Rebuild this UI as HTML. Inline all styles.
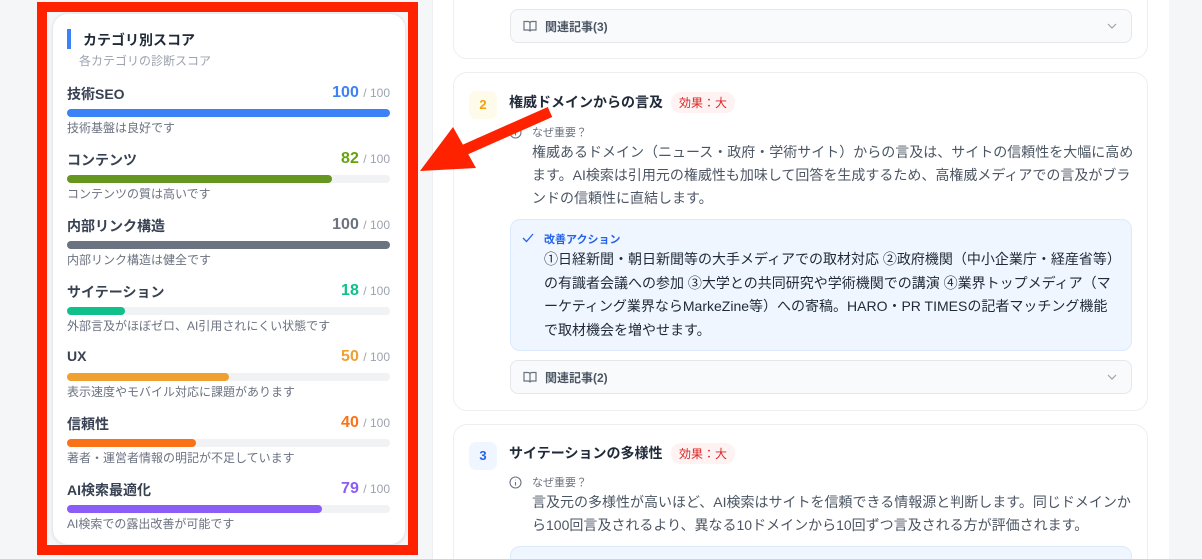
<!DOCTYPE html>
<html style="width:1202px;height:559px;overflow:hidden"><head><meta charset="utf-8"><style>
*{margin:0;padding:0;box-sizing:border-box}
body{width:1202px;height:559px;overflow:hidden;background:#f5f6f8;font-family:"Liberation Sans","Noto Sans CJK JP",sans-serif;position:relative;color:#1f2937}
.a{position:absolute;white-space:nowrap}
.frame{left:37px;top:2px;width:381px;height:553px;border:10px solid #ff2200}
.card{left:52px;top:13px;width:354px;height:532px;background:#fff;border-radius:16px;border:1px solid #e8eaee;box-shadow:0 1px 3px rgba(0,0,0,.08)}
.nm{font-size:14px;font-weight:bold;color:#374151}
.sc{font-size:16px;font-weight:bold;text-align:right}
.sc span{font-size:12px;font-weight:normal;color:#9ca3af}
.bar{left:67px;width:323px;height:8px;border-radius:4px;background:#f1f2f4}
.bar i{display:block;height:8px;border-radius:4px}
.ds{font-size:12px;color:#6b7280}
.panel{left:432px;top:-10px;width:737px;height:569px;background:#fff;border-left:1px solid #eceef1}
.ic{background:#fff;border:1px solid #eceef1;border-radius:14px;left:453px;width:695px}
.rel{left:510px;width:622px;height:34px;background:#f9fafb;border:1px solid #e5e7eb;border-radius:8px;font-size:12px;font-weight:bold;color:#4b5563}
.num{left:469px;width:28px;height:28px;border-radius:7px;font-size:13px;font-weight:bold;text-align:center;line-height:28px}
.h{font-size:14px;font-weight:bold;color:#1f2937}
.bd{font-size:12px;color:#dc2626;background:#fef2f2;border-radius:10px;padding:2px 8px}
.why{font-size:11px;color:#6b7280}
.tx{font-size:14px;color:#4b5563;line-height:23px;white-space:nowrap}
.act{left:510px;width:622px;background:#eff6ff;border:1px solid #dbeafe;border-radius:10px}
</style></head><body>
<div class="a panel"></div>
<div class="a ic" style="top:-20px;height:79px"></div>
<div class="a rel" style="top:9px"><svg class="a" style="left:12px;top:9px" width="14" height="14" viewBox="0 0 14 14" fill="none" stroke="#6b7280" stroke-width="1.2"><path d="M1 2.5h4q2 0 2 2v8q0-1.5-2-1.5H1z M13 2.5H9q-2 0-2 2v8q0-1.5 2-1.5h4z"/></svg><span class="a" style="left:34px;top:8px">関連記事(3)</span><svg class="a" style="right:14px;top:13px" width="10" height="6" viewBox="0 0 10 6" fill="none" stroke="#9ca3af" stroke-width="1.2"><path d="M1 1l4 4 4-4"/></svg></div>
<div class="a ic" style="top:72px;height:339px"></div>
<div class="a num" style="top:91px;background:#fffbeb;color:#f59e0b">2</div>
<div class="a h" style="left:509px;top:92px">権威ドメインからの言及</div>
<div class="a bd" style="left:671px;top:92px">効果：大</div>
<svg class="a" style="left:509px;top:126px" width="13" height="13" viewBox="0 0 13 13" fill="none" stroke="#6b7280" stroke-width="1.1"><circle cx="6.5" cy="6.5" r="5.5"/><path d="M6.5 6v3.5M6.5 3.8v.4"/></svg>
<div class="a why" style="left:532px;top:124px">なぜ重要？</div>
<div class="a tx" style="left:532px;top:141px">権威あるドメイン（ニュース・政府・学術サイト）からの言及は、サイトの信頼性を大幅に高め<br>ます。AI検索は引用元の権威性も加味して回答を生成するため、高権威メディアでの言及がブラ<br>ンドの信頼性に直結します。</div>
<div class="a act" style="top:219px;height:132px"></div>
<svg class="a" style="left:522px;top:233px" width="12" height="10" viewBox="0 0 12 10" fill="none" stroke="#2563eb" stroke-width="1.3"><path d="M1 5l3.5 3.5L11 1"/></svg>
<div class="a" style="left:544px;top:231px;font-size:11px;color:#2563eb;font-weight:bold">改善アクション</div>
<div class="a tx" style="left:544px;top:248px;color:#1f2937;line-height:23.5px">①日経新聞・朝日新聞等の大手メディアでの取材対応 ②政府機関（中小企業庁・経産省等）<br>の有識者会議への参加 ③大学との共同研究や学術機関での講演 ④業界トップメディア（マ<br>ーケティング業界ならMarkeZine等）への寄稿。HARO・PR TIMESの記者マッチング機能<br>で取材機会を増やせます。</div>
<div class="a rel" style="top:360px"><svg class="a" style="left:12px;top:9px" width="14" height="14" viewBox="0 0 14 14" fill="none" stroke="#6b7280" stroke-width="1.2"><path d="M1 2.5h4q2 0 2 2v8q0-1.5-2-1.5H1z M13 2.5H9q-2 0-2 2v8q0-1.5 2-1.5h4z"/></svg><span class="a" style="left:34px;top:8px">関連記事(2)</span><svg class="a" style="right:14px;top:13px" width="10" height="6" viewBox="0 0 10 6" fill="none" stroke="#9ca3af" stroke-width="1.2"><path d="M1 1l4 4 4-4"/></svg></div>
<div class="a ic" style="top:424px;height:150px"></div>
<div class="a num" style="top:442px;background:#eff6ff;color:#2563eb">3</div>
<div class="a h" style="left:509px;top:443px">サイテーションの多様性</div>
<div class="a bd" style="left:671px;top:443px">効果：大</div>
<svg class="a" style="left:509px;top:476px" width="13" height="13" viewBox="0 0 13 13" fill="none" stroke="#6b7280" stroke-width="1.1"><circle cx="6.5" cy="6.5" r="5.5"/><path d="M6.5 6v3.5M6.5 3.8v.4"/></svg>
<div class="a why" style="left:532px;top:474px">なぜ重要？</div>
<div class="a tx" style="left:532px;top:491px">言及元の多様性が高いほど、AI検索はサイトを信頼できる情報源と判断します。同じドメインか<br>ら100回言及されるより、異なる10ドメインから10回ずつ言及される方が評価されます。</div>
<div class="a act" style="top:546px;height:20px"></div>

<div class="a frame"></div>
<div class="a card"></div>
<div class="a" style="left:67px;top:29px;width:4px;height:20px;background:#3b82f6"></div>
<div class="a" style="left:83px;top:30px;font-size:14px;font-weight:bold;color:#1f2937">カテゴリ別スコア</div>
<div class="a" style="left:79px;top:52px;font-size:12px;color:#9ca3af">各カテゴリの診断スコア</div>

<div class="a nm" style="left:67px;top:84px">技術SEO</div><div class="a sc" style="right:812px;top:84px;color:#3b82f6">100 <span>/ 100</span></div>
<div class="a bar" style="top:109px"><i style="width:100%;background:#3b82f6"></i></div><div class="a ds" style="left:67px;top:119px">技術基盤は良好です</div>

<div class="a nm" style="left:67px;top:150px">コンテンツ</div><div class="a sc" style="right:812px;top:150px;color:#65a30d">82 <span>/ 100</span></div>
<div class="a bar" style="top:175px"><i style="width:82%;background:#65961f"></i></div><div class="a ds" style="left:67px;top:185px">コンテンツの質は高いです</div>

<div class="a nm" style="left:67px;top:216px">内部リンク構造</div><div class="a sc" style="right:812px;top:216px;color:#6b7280">100 <span>/ 100</span></div>
<div class="a bar" style="top:241px"><i style="width:100%;background:#6b7280"></i></div><div class="a ds" style="left:67px;top:251px">内部リンク構造は健全です</div>

<div class="a nm" style="left:67px;top:282px">サイテーション</div><div class="a sc" style="right:812px;top:282px;color:#10c08a">18 <span>/ 100</span></div>
<div class="a bar" style="top:307px"><i style="width:18%;background:#10c08a"></i></div><div class="a ds" style="left:67px;top:317px">外部言及がほぼゼロ、AI引用されにくい状態です</div>

<div class="a nm" style="left:67px;top:348px">UX</div><div class="a sc" style="right:812px;top:348px;color:#f0a030">50 <span>/ 100</span></div>
<div class="a bar" style="top:373px"><i style="width:50%;background:#f0a030"></i></div><div class="a ds" style="left:67px;top:383px">表示速度やモバイル対応に課題があります</div>

<div class="a nm" style="left:67px;top:414px">信頼性</div><div class="a sc" style="right:812px;top:414px;color:#f97316">40 <span>/ 100</span></div>
<div class="a bar" style="top:439px"><i style="width:40%;background:#f97316"></i></div><div class="a ds" style="left:67px;top:449px">著者・運営者情報の明記が不足しています</div>

<div class="a nm" style="left:67px;top:480px">AI検索最適化</div><div class="a sc" style="right:812px;top:480px;color:#8b5cf6">79 <span>/ 100</span></div>
<div class="a bar" style="top:505px"><i style="width:79%;background:#8b5cf6"></i></div><div class="a ds" style="left:67px;top:515px">AI検索での露出改善が可能です</div>

<svg class="a" style="left:0;top:0" width="1202" height="559"><line x1="550" y1="112" x2="462" y2="151" stroke="#ff2200" stroke-width="11"/><polygon points="420,171 453,127 476,168" fill="#ff2200"/></svg>
</body></html>
